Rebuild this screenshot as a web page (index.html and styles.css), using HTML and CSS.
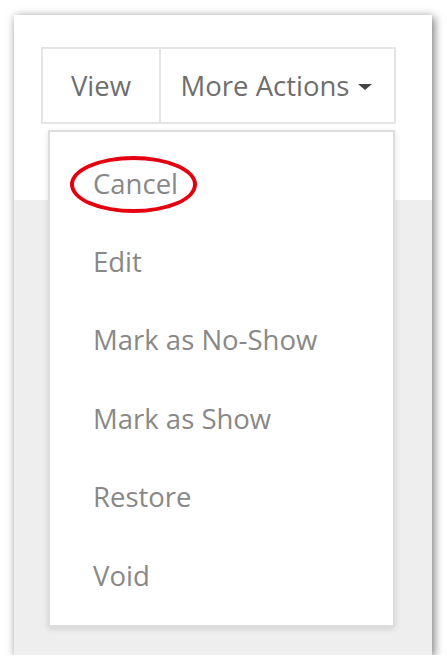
FILE: index.html
```html
<!DOCTYPE html>
<html>
<head>
<meta charset="utf-8">
<link rel="stylesheet" href="styles.css">
</head>
<body>
<div class="panel">
  <div class="btn-group">
    <div class="btn btn-view">View</div>
    <div class="btn btn-more">More Actions <span class="caret"></span></div>
  </div>
  <ul class="menu">
    <li class="item item-cancel"><span class="label">Cancel</span><span class="ring"></span></li>
    <li class="item">Edit</li>
    <li class="item">Mark as No-Show</li>
    <li class="item">Mark as Show</li>
    <li class="item">Restore</li>
    <li class="item">Void</li>
  </ul>
</div>
</body>
</html>
```

FILE: styles.css
```css
html, body {
  margin: 0;
  padding: 0;
  background: #ffffff;
}
body {
  font-family: "Open Sans", "Liberation Sans", sans-serif;
}
.panel {
  box-sizing: border-box;
  margin: 15px 0 0 14px;
  width: 418px;
  height: 640px;
  padding: 32px 0 0 27px;
  background: linear-gradient(#ffffff 0, #ffffff 185px, #eeeeee 185px, #eeeeee 100%);
  box-shadow: 2px 2px 9px rgba(0, 0, 0, 0.55);
}
.btn-group {
  box-sizing: border-box;
  display: flex;
  width: 355px;
  height: 77px;
  border: 2px solid #e4e4e4;
  background: #fff;
}
.btn {
  display: flex;
  align-items: center;
  justify-content: center;
  font-size: 27.5px;
  color: #6e6e6e;
}
.btn-view {
  width: 116px;
  border-right: 2px solid #e4e4e4;
}
.btn-more {
  flex: 1;
  gap: 9px;
  padding-right: 2px;
}
.caret {
  width: 0;
  height: 0;
  border-left: 7px solid transparent;
  border-right: 7px solid transparent;
  border-top: 6px solid #444;
  margin-top: 3px;
}
.menu {
  box-sizing: border-box;
  list-style: none;
  margin: 6px 0 0 7px;
  padding: 12px 0 12px 0;
  width: 347px;
  height: 497px;
  background: #fff;
  border: 2px solid #dddddd;
  box-shadow: 0 2px 6px rgba(0, 0, 0, 0.12);
}
.item {
  height: 78.4px;
  display: flex;
  align-items: center;
  padding-left: 43px;
  font-size: 27.5px;
  color: #888888;
  position: relative;
}
.ring {
  position: absolute;
  left: 20px;
  top: 12px;
  width: 119px;
  height: 49px;
  border: 4.5px solid #e5000f;
  border-radius: 50%;
}
```
